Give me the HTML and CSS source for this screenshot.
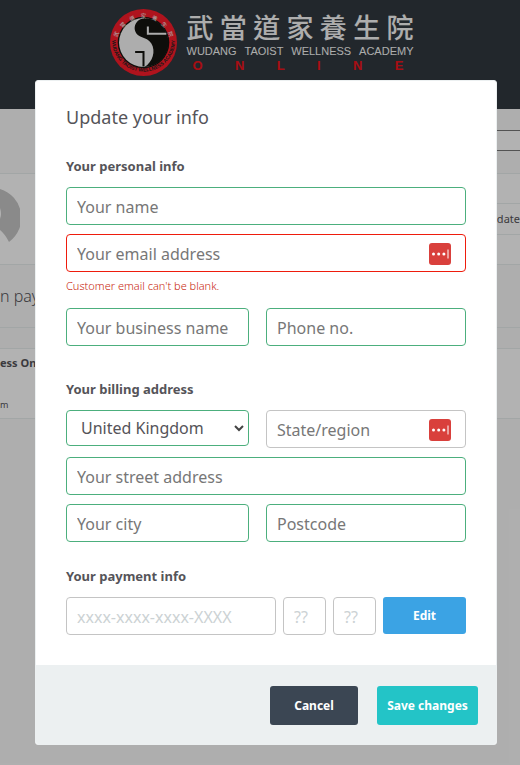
FILE: index.html
```html
<!DOCTYPE html>
<html lang="en">
<head>
    <meta charset="UTF-8">
    <meta name="viewport" content="width=device-width, initial-scale=1.0">
    <title>Update your info</title>
    <link rel="stylesheet" href="styles.css">
</head>
<body>
    <header class="site-header">
        <div class="logo">
            <svg class="logo-badge" viewBox="13 19 200 200" aria-hidden="true">
                <defs>
                    <path id="arc-top" d="M31 128 A82 82 0 1 1 195 128"/>
                    <path id="arc-bottom" d="M19 112 A94 94 0 1 0 207 112"/>
                </defs>
                <circle cx="113" cy="119" r="100" fill="#fb1c2a"/>
                <circle cx="113" cy="119" r="77" fill="#151510"/>
                <circle cx="113" cy="119" r="73" fill="#f8f8f8"/>
                <path d="M113 46 C92 52 83 68 88 85 C94 106 122 101 136 121 C151 145 140 177 116 192 A73 73 0 0 0 113 46 Z" fill="#151510"/>
                <path d="M126 71 V93 H181" fill="none" stroke="#f8f8f8" stroke-width="6"/>
                <path d="M88 147 H113 V191" fill="none" stroke="#151510" stroke-width="6"/>
                <text class="badge-cn"><textPath href="#arc-top" startOffset="50%" text-anchor="middle">武　當　道　家　養　生　院</textPath></text>
                <text class="badge-en"><textPath href="#arc-bottom" startOffset="50%" text-anchor="middle">WUDANG TAOIST WELLNESS ACADEMY</textPath></text>
            </svg>
            <div class="logo-text">
                <div class="logo-cn" lang="zh-Hant"><span>武</span><span>當</span><span>道</span><span>家</span><span>養</span><span>生</span><span>院</span></div>
                <div class="logo-en"><span>WUDANG</span><span>TAOIST</span><span>WELLNESS</span><span>ACADEMY</span></div>
                <div class="logo-online"><span>O</span><span>N</span><span>L</span><span>I</span><span>N</span><span>E</span></div>
            </div>
        </div>
    </header>

    <main class="page">
        <div class="toolbar"><div class="toolbar-box"></div></div>
        <section class="account">
            <svg class="avatar" viewBox="0 0 20 60" aria-hidden="true">
                <path d="M0 2 A30 30 0 0 1 9 55 Q5 47 0 43 V32 Q2 27 0 21 Z"/>
            </svg>
            <div class="update-row">pdate</div>
        </section>
        <h2 class="plan-title">n pay</h2>
        <section class="plan">
            <strong>ess On</strong>
            <small>m</small>
        </section>
    </main>

    <div class="overlay">
        <form class="modal" novalidate>
            <div class="modal-body">
                <h1>Update your info</h1>

                <h3>Your personal info</h3>
                <input class="field valid" type="text" placeholder="Your name" aria-label="Your name">
                <div class="field-wrap">
                    <input class="field invalid" type="email" placeholder="Your email address" aria-label="Your email address">
                    <svg class="pass-icon" viewBox="0 0 22 22" aria-hidden="true">
                        <rect width="22" height="22" rx="3"/>
                        <circle cx="4.5" cy="11" r="1.5"/><circle cx="9.7" cy="11" r="1.5"/><circle cx="14.9" cy="11" r="1.5"/>
                        <path d="M19 6.5V15.5"/>
                    </svg>
                </div>
                <p class="error">Customer email can't be blank.</p>
                <div class="row">
                    <input class="field valid" type="text" placeholder="Your business name" aria-label="Your business name">
                    <input class="field valid" type="tel" placeholder="Phone no." aria-label="Phone no.">
                </div>

                <h3 class="billing-title">Your billing address</h3>
                <div class="row">
                    <div class="select-wrap">
                        <select class="field valid" aria-label="Country">
                            <option>United Kingdom</option>
                        </select>
                        <svg class="chevron" viewBox="0 0 10 8" aria-hidden="true"><path d="M1 2L5 6L9 2"/></svg>
                    </div>
                    <div class="field-wrap">
                        <input class="field" type="text" placeholder="State/region" aria-label="State/region">
                        <svg class="pass-icon" viewBox="0 0 22 22" aria-hidden="true">
                            <rect width="22" height="22" rx="3"/>
                            <circle cx="4.5" cy="11" r="1.5"/><circle cx="9.7" cy="11" r="1.5"/><circle cx="14.9" cy="11" r="1.5"/>
                            <path d="M19 6.5V15.5"/>
                        </svg>
                    </div>
                </div>
                <input class="field valid" type="text" placeholder="Your street address" aria-label="Your street address">
                <div class="row">
                    <input class="field valid" type="text" placeholder="Your city" aria-label="Your city">
                    <input class="field valid" type="text" placeholder="Postcode" aria-label="Postcode">
                </div>

                <h3>Your payment info</h3>
                <div class="card-row">
                    <input class="field muted" type="text" placeholder="xxxx-xxxx-xxxx-XXXX" aria-label="Card number">
                    <input class="field muted" type="text" placeholder="??" aria-label="Expiry month">
                    <input class="field muted" type="text" placeholder="??" aria-label="Expiry year">
                    <button class="btn btn-edit" type="button">Edit</button>
                </div>
            </div>
            <div class="modal-footer">
                <button class="btn btn-cancel" type="button">Cancel</button>
                <button class="btn btn-save" type="submit">Save changes</button>
            </div>
        </form>
    </div>
</body>
</html>
```
FILE: styles.css
```css
* {
    box-sizing: border-box;
}
body {
    position: relative;
    min-height: 100vh;
    margin: 0;
    overflow-x: hidden;
    background-color: #fafafa;
    color: #555459;
    font-family: "Noto Sans", "Open Sans", sans-serif;
    font-size: 16px;
}

/* Header and logo */
.site-header {
    height: 109px;
    padding-top: 9px;
    background-color: #32383f;
}
.logo {
    display: flex;
    justify-content: center;
    gap: 10px;
    padding-left: 3px;
}
.logo-badge {
    width: 67px;
    height: 67px;
}
.badge-cn {
    fill: #f8f8f8;
    font-family: "Noto Sans CJK TC", sans-serif;
    font-size: 16px;
}
.badge-en {
    fill: #222;
    font-family: "Liberation Sans", sans-serif;
    font-size: 15px;
    font-weight: bold;
}
.logo-text {
    width: 227px;
    color: #f8f8f8;
    font-family: "Liberation Sans", sans-serif;
}
.logo-cn,
.logo-en,
.logo-online {
    display: flex;
    justify-content: space-between;
}
.logo-cn {
    font-family: "Noto Sans CJK TC", sans-serif;
    font-size: 27px;
    font-weight: 500;
    line-height: 35px;
}
.logo-en {
    font-size: 11px;
    line-height: 14px;
}
.logo-online {
    padding: 0 10px 0 6px;
    color: #f0141c;
    font-size: 13px;
    font-weight: bold;
    line-height: 16px;
}

/* Account page */
.toolbar {
    height: 65px;
    padding-top: 21px;
    border-bottom: 1px solid #e8eeee;
}
.toolbar-box {
    height: 21px;
    margin-left: 40px;
    border-top: 1px solid #777;
    border-bottom: 1px solid #777;
    background-color: #fff;
}
.account {
    display: flex;
    justify-content: space-between;
    height: 91px;
    border-bottom: 1px solid #e8eeee;
    background-color: #fff;
}
.avatar {
    width: 20px;
    height: 60px;
    margin-top: 13px;
    fill: #c6c6c6;
}
.update-row {
    align-self: flex-start;
    width: 60px;
    margin-top: 29px;
    border-top: 1px solid #e8eeee;
    border-bottom: 1px solid #e8eeee;
    font-size: 11px;
    line-height: 30px;
    text-align: right;
}
.plan-title {
    margin: 0 0 20px;
    padding: 14px 0;
    border-bottom: 1px solid #e8eeee;
    font-size: 16px;
    font-weight: 300;
    line-height: 34px;
}
.plan {
    display: flex;
    flex-direction: column;
    gap: 26px;
    height: 71px;
    padding-top: 6px;
    border-top: 1px solid #e8eeee;
    border-bottom: 1px solid #e8eeee;
    background-color: #fff;
    font-size: 11px;
    line-height: 16px;
}
.plan small {
    font-size: 9px;
}

/* Modal */
.overlay {
    position: absolute;
    top: 0;
    left: 0;
    width: 100%;
    min-height: 100%;
    padding: 80px 23px 20px 35px;
    background-color: rgba(0, 0, 0, 0.3);
}
.modal {
    max-width: 600px;
    margin: 0 auto;
    border: 1px solid #ecf0f1;
    border-radius: 3px;
    overflow: hidden;
    background-color: #fff;
}
.modal-body {
    display: flex;
    flex-direction: column;
    gap: 9px;
    padding: 22px 30px 30px;
}
.modal h1 {
    margin: 0;
    font-size: 18px;
    font-weight: 400;
    line-height: 29px;
}
.modal h3 {
    margin: 13px 0 0;
    font-size: 13px;
    font-weight: 700;
    line-height: 24px;
}
.modal .billing-title {
    margin-top: 22px;
}
.field {
    display: block;
    width: 100%;
    min-width: 0;
    height: 38px;
    padding: 2px 10px 0;
    border: 1px solid #c4c4c4;
    border-radius: 4px;
    background-color: #fff;
    color: #555459;
    font-family: inherit;
    font-size: 16px;
}
.field::placeholder {
    color: #777;
    opacity: 1;
}
.field.muted::placeholder {
    color: #ccd2d4;
}
.valid {
    border-color: #4caf7d;
}
.invalid {
    border-color: #ee1c0c;
}
.field-wrap,
.select-wrap {
    position: relative;
}
.pass-icon {
    position: absolute;
    top: 9px;
    right: 15px;
    width: 22px;
    height: 22px;
    fill: #fff;
}
.pass-icon rect {
    fill: #d9403c;
}
.pass-icon path {
    stroke: #fff;
    stroke-width: 1;
}
.select-wrap .field {
    height: 36px;
    padding: 0 14px;
    appearance: none;
}
.chevron {
    position: absolute;
    top: 14px;
    right: 5px;
    width: 10px;
    height: 8px;
    fill: none;
    stroke: #444;
    stroke-width: 2;
    pointer-events: none;
}
.error {
    margin: 0 0 8px;
    color: #c81e0e;
    font-size: 11px;
    font-weight: 300;
    line-height: 10px;
}
.row {
    display: grid;
    grid-template-columns: 183fr 200fr;
    gap: 17px;
}
.card-row {
    display: grid;
    grid-template-columns: 1fr 43px 43px 83px;
    gap: 7px;
}
.btn {
    border: none;
    border-radius: 3px;
    color: #fff;
    font-family: inherit;
    font-size: 12px;
    font-weight: 700;
    cursor: pointer;
}
.btn-edit {
    height: 37px;
    background-color: #3ba3e4;
}
.modal-footer {
    display: flex;
    justify-content: flex-end;
    gap: 19px;
    padding: 21px 18px 19px;
    background-color: #ecf0f1;
}
.modal-footer .btn {
    height: 39px;
}
.btn-cancel {
    width: 88px;
    background-color: #3b4653;
}
.btn-save {
    width: 101px;
    padding: 0;
    background-color: #23c4c7;
}
```
